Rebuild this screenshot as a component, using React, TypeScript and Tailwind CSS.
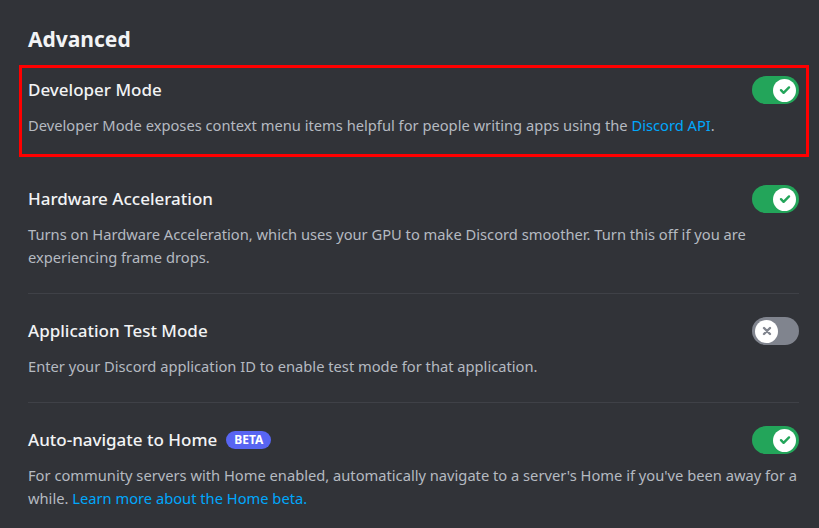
import React from "react";

const Toggle = ({ on }: { on: boolean }) => (
  <div
    className={`flex h-[28px] w-[47px] shrink-0 items-center rounded-full px-[3px] ${
      on ? "justify-end bg-[#23a55a]" : "justify-start bg-[#80848e]"
    }`}
  >
    <div className="flex h-[23px] w-[23px] items-center justify-center rounded-full bg-white">
      {on ? (
        <svg width="14" height="14" viewBox="0 0 14 14" fill="none">
          <path d="M3 7.2l2.6 2.6L11 4.4" stroke="#23a55a" strokeWidth="2.4" strokeLinecap="round" strokeLinejoin="round" />
        </svg>
      ) : (
        <svg width="12" height="12" viewBox="0 0 12 12" fill="none">
          <path d="M3 3l6 6M9 3l-6 6" stroke="#80848e" strokeWidth="2.4" strokeLinecap="round" />
        </svg>
      )}
    </div>
  </div>
);

const Row = ({
  title,
  badge,
  on,
  children,
}: {
  title: string;
  badge?: string;
  on: boolean;
  children: React.ReactNode;
}) => (
  <div>
    <div className="flex items-center justify-between">
      <div className="flex items-center gap-[9px]">
        <span className="text-[17px] leading-[24px] font-medium text-[#f2f3f5]">{title}</span>
        {badge && (
          <span className="rounded-full bg-[#5865f2] px-[8px] text-[12px] leading-[18px] font-bold text-white">
            {badge}
          </span>
        )}
      </div>
      <Toggle on={on} />
    </div>
    <p className="mt-[10px] text-[14.7px] leading-[23px] text-[#b5bac1]">{children}</p>
  </div>
);

const Divider = () => <div className="mt-[24px] mb-[23px] h-px bg-[#3f4147]" />;

export default function App() {
  return (
    <div
      className="h-[528px] w-[819px] overflow-hidden bg-[#313338] pt-[25px] pl-[28px] pr-[20px]"
      style={{ fontFamily: '"Noto Sans", "Open Sans", sans-serif' }}
    >
      <h1 className="text-[21px] leading-[28px] font-bold text-[#f2f3f5]">Advanced</h1>

      {/* Developer Mode (highlighted) */}
      <div className="mt-[12px] -ml-[9px] -mr-[10px] border-[3px] border-[#ff0000] pt-[8px] pb-[17px] pl-[6px] pr-[7px]">
        <Row title="Developer Mode" on>
          Developer Mode exposes context menu items helpful for people writing apps using the{" "}
          <span className="text-[#00a8fc]">Discord API</span>.
        </Row>
      </div>

      <div className="mt-[28px]">
        <Row title="Hardware Acceleration" on>
          Turns on Hardware Acceleration, which uses your GPU to make Discord smoother. Turn this off if you are
          experiencing frame drops.
        </Row>
      </div>
      <Divider />
      <Row title="Application Test Mode" on={false}>
        Enter your Discord application ID to enable test mode for that application.
      </Row>
      <Divider />
      <Row title="Auto-navigate to Home" badge="BETA" on>
        For community servers with Home enabled, automatically navigate to a server's Home if you've been away for a
        while. <span className="text-[#00a8fc]">Learn more about the Home beta.</span>
      </Row>
    </div>
  );
}
